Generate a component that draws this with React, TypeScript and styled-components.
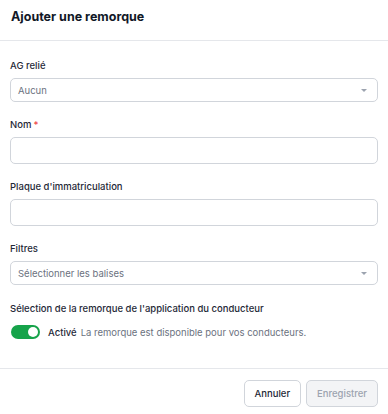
import React, { useState } from 'react';
import styled, { createGlobalStyle } from 'styled-components';

const GlobalStyle = createGlobalStyle`
  html, body {
    margin: 0;
    padding: 0;
    background: #ffffff;
  }
  body {
    font-family: Inter, 'Liberation Sans', sans-serif;
    color: #1f2937;
  }
  * {
    box-sizing: border-box;
  }
`;

const Dialog = styled.div`
  width: 388px;
  height: 414px;
  display: flex;
  flex-direction: column;
  background: #fff;
`;

const Header = styled.div`
  height: 41px;
  padding: 0 11px;
  display: flex;
  align-items: center;
  padding-bottom: 7px;
  border-bottom: 1px solid #e5e7eb;
`;

const Title = styled.h2`
  margin: 0;
  font-size: 12.5px;
  font-weight: 700;
  color: #111827;
`;

const Form = styled.div`
  flex: 1;
  padding: 19px 10px 0 10px;
  display: flex;
  flex-direction: column;
  gap: 17px;
`;

const Field = styled.div<{ $extraTop?: number }>`
  display: flex;
  flex-direction: column;
  gap: 6px;
  margin-top: ${(p) => p.$extraTop ?? 0}px;
`;

const Label = styled.label`
  font-size: 9.5px;
  line-height: 12px;
  font-weight: 500;
  color: #1f2937;
`;

const Required = styled.span`
  color: #ef4444;
  margin-left: 2px;
`;

const SelectBox = styled.div`
  height: 24px;
  border: 1px solid #d1d5db;
  border-radius: 5px;
  padding: 0 10px 0 7px;
  display: flex;
  align-items: center;
  justify-content: space-between;
  font-size: 9.5px;
  color: #6b7280;
`;

const Caret = styled.span`
  width: 0;
  height: 0;
  border-left: 3px solid transparent;
  border-right: 3px solid transparent;
  border-top: 3px solid #9ca3af;
`;

const TextInput = styled.input`
  height: 27px;
  border: 1px solid #d1d5db;
  border-radius: 5px;
  padding: 0 8px;
  font-family: inherit;
  font-size: 10px;
  outline: none;
`;

const ToggleRow = styled.div`
  display: flex;
  align-items: center;
  font-size: 9.5px;
  margin-top: 4px;
`;

const Switch = styled.button<{ $on: boolean }>`
  position: relative;
  width: 29px;
  height: 14px;
  border: none;
  padding: 0;
  margin: 0 8px 0 1px;
  border-radius: 7px;
  background: ${(p) => (p.$on ? '#16a34a' : '#d1d5db')};
  cursor: pointer;

  &::after {
    content: '';
    position: absolute;
    top: 2px;
    left: ${(p) => (p.$on ? '17px' : '2px')};
    width: 10px;
    height: 10px;
    border-radius: 50%;
    background: #fff;
  }
`;

const ToggleState = styled.span`
  font-weight: 500;
  color: #1f2937;
  margin-right: 4px;
`;

const ToggleHint = styled.span`
  color: #6b7280;
`;

const Footer = styled.div`
  border-top: 1px solid #e5e7eb;
  padding: 11px 10px 7px;
  display: flex;
  justify-content: flex-end;
  gap: 5px;
`;

const Button = styled.button<{ $disabled?: boolean }>`
  height: 27px;
  padding: 0 10px;
  border-radius: 5px;
  border: 1px solid #d1d5db;
  font-family: inherit;
  font-size: 9.5px;
  font-weight: 500;
  background: ${(p) => (p.$disabled ? '#f3f4f6' : '#ffffff')};
  color: ${(p) => (p.$disabled ? '#9ca3af' : '#1f2937')};
`;

export default function App() {
  const [enabled, setEnabled] = useState(true);

  return (
    <>
      <GlobalStyle />
      <Dialog>
        <Header>
          <Title>Ajouter une remorque</Title>
        </Header>
        <Form>
          <Field>
            <Label>AG relié</Label>
            <SelectBox>
              Aucun
              <Caret />
            </SelectBox>
          </Field>
          <Field>
            <Label>
              Nom<Required>*</Required>
            </Label>
            <TextInput />
          </Field>
          <Field>
            <Label>Plaque d'immatriculation</Label>
            <TextInput />
          </Field>
          <Field>
            <Label>Filtres</Label>
            <SelectBox>
              Sélectionner les balises
              <Caret />
            </SelectBox>
          </Field>
          <Field $extraTop={1}>
            <Label>Sélection de la remorque de l'application du conducteur</Label>
            <ToggleRow>
              <Switch $on={enabled} onClick={() => setEnabled(!enabled)} />
              <ToggleState>Activé</ToggleState>
              <ToggleHint>La remorque est disponible pour vos conducteurs.</ToggleHint>
            </ToggleRow>
          </Field>
        </Form>
        <Footer>
          <Button>Annuler</Button>
          <Button $disabled disabled>
            Enregistrer
          </Button>
        </Footer>
      </Dialog>
    </>
  );
}
